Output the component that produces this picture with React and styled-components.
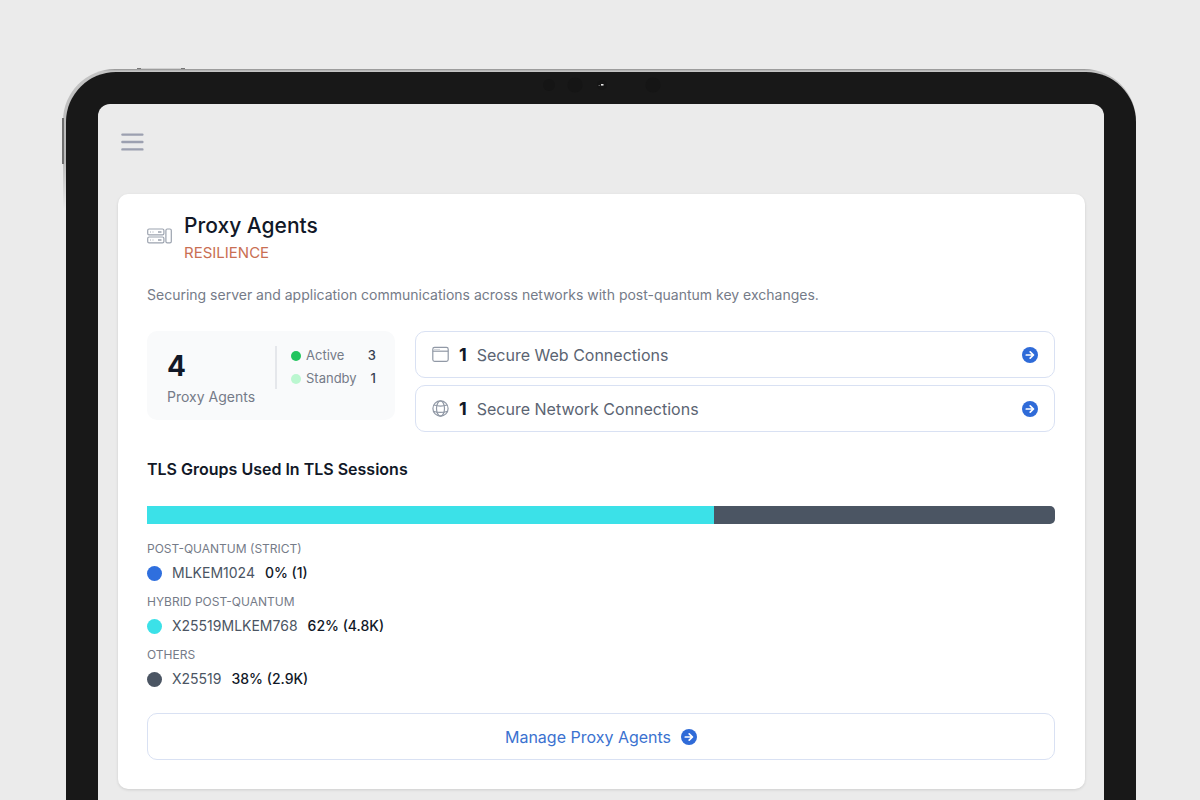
import React from "react";
import styled, { createGlobalStyle } from "styled-components";

const GlobalStyle = createGlobalStyle`
  * {
    box-sizing: border-box;
  }
  body {
    margin: 0;
    background: #ebebeb;
    font-family: "Inter", "Liberation Sans", sans-serif;
    color: #757b88;
  }
  h1, h2, h3, p, dl, dd, dt, ul {
    margin: 0;
    padding: 0;
    font-weight: 400;
  }
`;

const Page = styled.div`
  display: flex;
  flex-direction: column;
  min-height: 100vh;
  padding: 69px 64px 0 63px;
`;

/* metal edge of the tablet */
const Edge = styled.div`
  position: relative;
  flex: 1;
  display: flex;
  padding: 3px 0 0 3px;
  border-radius: 52px 52px 0 0;
  background: linear-gradient(#8f8f8f 0, #c4c4c4 2px, #b8b8b8 90px, #ebebeb 140px);
`;

const SideButton = styled.span`
  position: absolute;
  left: -1px;
  top: 49px;
  width: 2px;
  height: 46px;
  background: #6e6e6e;
`;

const TopButton = styled.span`
  position: absolute;
  top: -1px;
  left: 74px;
  width: 48px;
  height: 1px;
  background: linear-gradient(90deg, #777 0, #777 4px, #d0d0d0 4px, #d0d0d0 44px, #777 44px);
`;

const Bezel = styled.div`
  position: relative;
  flex: 1;
  display: flex;
  padding: 32px 32px 0;
  border-radius: 50px 50px 0 0;
  background: #181818;
`;

const Sensors = styled.svg`
  position: absolute;
  top: 4px;
  left: 50%;
  margin-left: -61px;
`;

const Screen = styled.div`
  flex: 1;
  min-width: 0;
  padding: 29px 19px 11px 20px;
  border-radius: 12px 12px 0 0;
  background: #ebebeb;
`;

const MenuButton = styled.button`
  display: block;
  margin: 0 0 43px 3px;
  padding: 0;
  border: 0;
  background: none;
  line-height: 0;
  cursor: pointer;
`;

const Card = styled.main`
  display: flex;
  flex-direction: column;
  padding: 18px 30px 29px 29px;
  border-radius: 10px;
  background: #fff;
  box-shadow: 0 1px 3px rgba(0, 0, 0, 0.12);
`;

const CardHeader = styled.header`
  display: flex;
  align-items: flex-start;
  gap: 12px;

  > svg {
    margin-top: 16px;
  }
`;

const Title = styled.h1`
  font-size: 21px;
  line-height: 28px;
  font-weight: 500;
  color: #111827;
`;

const Tag = styled.p`
  font-size: 15px;
  line-height: 26px;
  color: #c96f53;
`;

const Description = styled.p`
  margin-top: 19px;
  font-size: 14px;
  line-height: 20px;
`;

const Summary = styled.section`
  display: flex;
  align-items: flex-start;
  gap: 20px;
  margin-top: 26px;
`;

const AgentBox = styled.div`
  display: flex;
  width: 248px;
  height: 89px;
  padding: 15px 19px 12px 20px;
  border-radius: 10px;
  background: #f9fafb;
`;

const AgentTotal = styled.div`
  flex: 1;
  font-size: 14px;
  line-height: 22px;
  white-space: nowrap;
`;

const BigNumber = styled.div`
  font-size: 28px;
  line-height: 40px;
  font-weight: 700;
  color: #111827;
`;

const StatusList = styled.ul`
  display: flex;
  flex-direction: column;
  width: 101px;
  height: 43px;
  padding-left: 14px;
  border-left: 2px solid #e5e7eb;
  list-style: none;
`;

const Status = styled.li`
  display: flex;
  align-items: center;
  gap: 5px;
  font-size: 13px;
  line-height: 23px;
  margin-top: ${(p) => (p.$first ? "-2px" : "0")};
`;

const Count = styled.span`
  margin-left: auto;
  font-weight: 500;
  color: #374151;
`;

const Dot = styled.span`
  flex: none;
  width: ${(p) => p.$size}px;
  height: ${(p) => p.$size}px;
  border-radius: 50%;
  background: ${(p) => p.$color};
`;

const Connections = styled.nav`
  flex: 1;
  display: flex;
  flex-direction: column;
  gap: 7px;
`;

const BoxLink = styled.a`
  display: flex;
  align-items: center;
  justify-content: ${(p) => (p.$center ? "center" : "flex-start")};
  gap: 10px;
  height: 47px;
  padding: 0 16px;
  border: 1px solid #d9e1f3;
  border-radius: 10px;
  font-size: 16px;
  line-height: 24px;
  color: ${(p) => (p.$center ? "#3b72d0" : "#5b6472")};
  text-decoration: none;

  strong {
    font-size: 18px;
    font-weight: 700;
    color: #111827;
  }
  > svg {
    flex: none;
  }
  > span {
    flex: ${(p) => (p.$center ? "none" : "1")};
  }
`;

const Heading = styled.h2`
  margin-top: 25px;
  font-size: 16px;
  line-height: 24px;
  font-weight: 600;
  color: #111827;
`;

const Bar = styled.div`
  display: flex;
  height: 18px;
  margin: 25px 0 16px;
  border-radius: 0 5px 5px 0;
  overflow: hidden;
`;

const Segment = styled.div`
  background: ${(p) => p.$color};
`;

const Groups = styled.dl`
  display: flex;
  flex-direction: column;
  gap: 5px;
`;

const GroupName = styled.dt`
  font-size: 12px;
  line-height: 18px;
`;

const GroupValue = styled.dd`
  display: flex;
  align-items: center;
  gap: 10px;
  height: 30px;
  font-size: 14px;
  line-height: 20px;
  color: #4b5563;

  strong {
    font-weight: 500;
    color: #111827;
  }
`;

const Footer = styled.footer`
  margin-top: 19px;
`;

const groups = [
  { name: "POST-QUANTUM (STRICT)", algorithm: "MLKEM1024", percent: 0, count: "1", color: "#2f6fde" },
  { name: "HYBRID POST-QUANTUM", algorithm: "X25519MLKEM768", percent: 62.4, count: "4.8K", color: "#3be1e8" },
  { name: "OTHERS", algorithm: "X25519", percent: 37.6, count: "2.9K", color: "#4b5563" },
];

function ServerIcon() {
  return (
    <svg width="25" height="16" viewBox="0 0 25 16" fill="none" stroke="#9ca3af" strokeWidth="1.2">
      <rect x="0.7" y="1" width="16.2" height="5.9" rx="1.4" />
      <rect x="0.7" y="9" width="16.2" height="5.9" rx="1.4" />
      <rect x="18.9" y="1" width="5.4" height="13.9" rx="1.4" />
      <path d="M3 4h1M5.5 4h1M3 12h1M5.5 12h1" strokeWidth="0.9" />
      <path d="M11 4h3.5M11 12h3.5" strokeWidth="1.3" />
    </svg>
  );
}

function WindowIcon() {
  return (
    <svg width="17" height="17" viewBox="0 0 17 17" fill="none" stroke="#9199a6" strokeWidth="1.2">
      <rect x="0.8" y="1.4" width="15.4" height="14" rx="1.8" />
      <path d="M0.8 5.2h15.4" />
      <path d="M2.5 3.4h1M4.5 3.4h1M6.5 3.4h1" strokeWidth="0.9" />
    </svg>
  );
}

function GlobeIcon() {
  return (
    <svg width="17" height="17" viewBox="0 0 17 17" fill="none" stroke="#9199a6" strokeWidth="1.2">
      <circle cx="8.5" cy="8.5" r="7.6" />
      <ellipse cx="8.5" cy="8.5" rx="4" ry="7.6" />
      <path d="M1.9 5c3.8 1.3 9.4 1.3 13.2 0M1.5 11.2c4 1.4 10 1.4 14 0" />
    </svg>
  );
}

function ArrowIcon() {
  return (
    <svg width="16" height="16" viewBox="0 0 16 16" fill="none">
      <circle cx="8" cy="8" r="8" fill="#2f6bd8" />
      <path
        d="M4.3 8h7M8.2 4.8l3.3 3.2-3.3 3.2"
        stroke="#fff"
        strokeWidth="1.7"
        strokeLinecap="round"
        strokeLinejoin="round"
      />
    </svg>
  );
}

export default function App() {
  return (
    <>
      <GlobalStyle />
      <Page>
        <Edge>
          <SideButton />
          <TopButton />
          <Bezel>
            <Sensors width="130" height="18" viewBox="0 0 130 18" fill="#151515">
              <circle cx="9" cy="9" r="6" />
              <circle cx="35" cy="9" r="7.5" />
              <circle cx="62" cy="9" r="5" />
              <circle cx="113" cy="9" r="7.5" />
              <path d="M61 8h2.5v1.6h-2.5z" fill="#e5e5e5" />
              <path d="M58.5 9.2h1.6v0.8h-1.6z" fill="#777" />
            </Sensors>
            <Screen>
              <MenuButton aria-label="Menu">
                <svg width="23" height="18" viewBox="0 0 23 18" stroke="#9ca0b0" strokeWidth="2.4" strokeLinecap="round">
                  <path d="M1.4 1.6h20M1.4 9h20M1.4 16.4h20" />
                </svg>
              </MenuButton>
              <Card>
                <CardHeader>
                  <ServerIcon />
                  <div>
                    <Title>Proxy Agents</Title>
                    <Tag>RESILIENCE</Tag>
                  </div>
                </CardHeader>
                <Description>
                  Securing server and application communications across networks with post-quantum key exchanges.
                </Description>
                <Summary>
                  <AgentBox>
                    <AgentTotal>
                      <BigNumber>4</BigNumber>
                      Proxy Agents
                    </AgentTotal>
                    <StatusList>
                      <Status $first>
                        <Dot $size={10} $color="#22c55e" />
                        Active
                        <Count>3</Count>
                      </Status>
                      <Status>
                        <Dot $size={10} $color="#bbf7d0" />
                        Standby
                        <Count>1</Count>
                      </Status>
                    </StatusList>
                  </AgentBox>
                  <Connections>
                    <BoxLink href="#web">
                      <WindowIcon />
                      <strong>1</strong>
                      <span>Secure Web Connections</span>
                      <ArrowIcon />
                    </BoxLink>
                    <BoxLink href="#network">
                      <GlobeIcon />
                      <strong>1</strong>
                      <span>Secure Network Connections</span>
                      <ArrowIcon />
                    </BoxLink>
                  </Connections>
                </Summary>
                <Heading>TLS Groups Used In TLS Sessions</Heading>
                <Bar>
                  {groups.map((g) => (
                    <Segment key={g.name} $color={g.color} style={{ width: g.percent + "%" }} />
                  ))}
                </Bar>
                <Groups>
                  {groups.map((g) => (
                    <div key={g.name}>
                      <GroupName>{g.name}</GroupName>
                      <GroupValue>
                        <Dot $size={15} $color={g.color} />
                        {g.algorithm}
                        <strong>
                          {Math.round(g.percent)}% ({g.count})
                        </strong>
                      </GroupValue>
                    </div>
                  ))}
                </Groups>
                <Footer>
                  <BoxLink $center href="#manage">
                    <span>Manage Proxy Agents</span>
                    <ArrowIcon />
                  </BoxLink>
                </Footer>
              </Card>
            </Screen>
          </Bezel>
        </Edge>
      </Page>
    </>
  );
}
